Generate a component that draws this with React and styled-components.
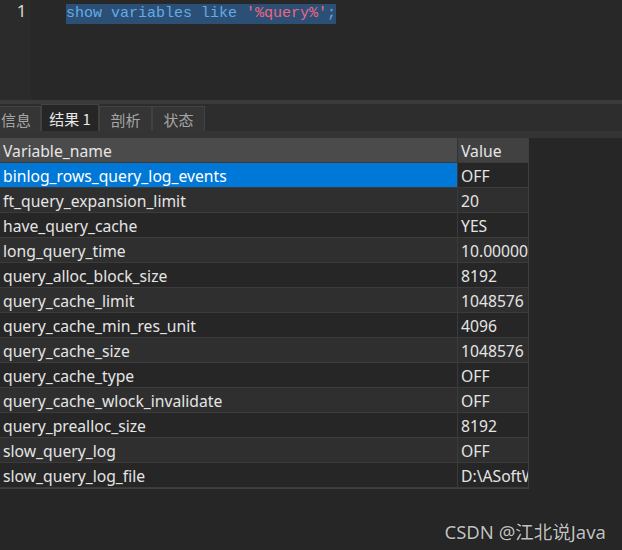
import React from "react";
import styled, { createGlobalStyle } from "styled-components";

const rows = [
  ["binlog_rows_query_log_events", "OFF"],
  ["ft_query_expansion_limit", "20"],
  ["have_query_cache", "YES"],
  ["long_query_time", "10.000000"],
  ["query_alloc_block_size", "8192"],
  ["query_cache_limit", "1048576"],
  ["query_cache_min_res_unit", "4096"],
  ["query_cache_size", "1048576"],
  ["query_cache_type", "OFF"],
  ["query_cache_wlock_invalidate", "OFF"],
  ["query_prealloc_size", "8192"],
  ["slow_query_log", "OFF"],
  ["slow_query_log_file", "D:\\ASoftWare\\mysql\\data\\slow.log"],
];

const tabs = ["信息", "结果 1", "剖析", "状态"];

const App = () => {
  return (
    <Page>
      <GlobalStyle />
      <Editor>
        <Gutter>
          <LineNo>1</LineNo>
        </Gutter>
        <Code>
          <Selected>
            show variables like <Str>'%query%'</Str>;
          </Selected>
        </Code>
      </Editor>
      <Splitter />
      <TabBar>
        {tabs.map((t, i) => (
          <Tab key={t} active={i === 1} first={i === 0}>
            {t}
          </Tab>
        ))}
      </TabBar>
      <Gap />
      <Grid>
        <HeadCell wide>Variable_name</HeadCell>
        <HeadCell>Value</HeadCell>
        {rows.map(([name, value], i) => (
          <React.Fragment key={name}>
            <Cell wide odd={i % 2 === 1} selected={i === 0}>
              {name}
            </Cell>
            <Cell odd={i % 2 === 1}>{value}</Cell>
          </React.Fragment>
        ))}
      </Grid>
      <Watermark>CSDN @江北说Java</Watermark>
    </Page>
  );
};

const GlobalStyle = createGlobalStyle`
  body {
    margin: 0;
    background: #262626;
  }
`;

const Page = styled.div`
  position: relative;
  width: 622px;
  height: 550px;
  background: #262626;
  overflow: hidden;
  font-family: "Noto Sans", "Noto Sans CJK SC", sans-serif;
`;

const Editor = styled.div`
  display: flex;
  height: 100px;
  background: #282828;
`;

const Gutter = styled.div`
  width: 31px;
  background: #2b2b2b;
  display: flex;
  justify-content: center;
`;

const LineNo = styled.div`
  font-family: "Noto Sans", sans-serif;
  font-size: 17px;
  line-height: 22px;
  color: #dcd6cc;
  padding-left: 12px;
`;

const Code = styled.div`
  padding-left: 35px;
`;

const Selected = styled.span`
  display: inline-block;
  background: #2c4f75;
  color: #62abe8;
  font-family: "Liberation Mono", monospace;
  font-size: 15px;
  line-height: 20px;
  white-space: pre;
`;

const Str = styled.span`
  color: #ee6582;
`;

const Splitter = styled.div`
  height: 4px;
  background: #3b3b3b;
`;

const TabBar = styled.div`
  display: flex;
  align-items: flex-end;
  height: 27px;
  background: #2d2d2d;
`;

const Tab = styled.div`
  box-sizing: border-box;
  height: ${(p) => (p.active ? "27px" : "25px")};
  width: ${(p) => (p.first ? "41px" : p.active ? "58px" : "53px")};
  padding-left: ${(p) => (p.first ? "1px" : "0")};
  display: flex;
  align-items: center;
  justify-content: ${(p) => (p.first ? "flex-start" : "center")};
  background: ${(p) => (p.active ? "#262626" : "#353535")};
  border: 1px solid #424242;
  border-left-width: ${(p) => (p.first ? "0" : "1px")};
  border-bottom: none;
  color: ${(p) => (p.active ? "#e8e8e8" : "#a6a6a6")};
  font-family: "Noto Sans CJK SC", sans-serif;
  font-size: 15px;
`;

const Gap = styled.div`
  height: 7px;
  background: #343434;
`;

const Grid = styled.div`
  display: grid;
  grid-template-columns: 457px 71px;
  width: 529px;
  border-right: 1px solid #3e3e3e;
  border-bottom: 1px solid #3e3e3e;
  box-sizing: border-box;
`;

const HeadCell = styled.div`
  box-sizing: border-box;
  height: 25px;
  padding: 1px 0 0 3px;
  display: flex;
  align-items: center;
  background: ${(p) => (p.wide ? "#4b4b4b" : "#414141")};
  border-bottom: 1px solid #3a3a3a;
  border-left: ${(p) => (p.wide ? "none" : "1px solid #333")};
  color: #e6e6e6;
  font-size: 15.7px;
  white-space: nowrap;
  overflow: hidden;
`;

const Cell = styled.div`
  box-sizing: border-box;
  height: 25px;
  padding: 1px 0 0 3px;
  display: flex;
  align-items: center;
  background: ${(p) =>
    p.selected ? "#0078d7" : p.odd ? "#2f2f2f" : "#262626"};
  border-bottom: 1px solid #3b3b3b;
  border-left: ${(p) => (p.wide ? "none" : "1px solid #3b3b3b")};
  color: ${(p) => (p.selected ? "#ffffff" : "#e4e4e4")};
  font-size: 15.7px;
  white-space: nowrap;
  overflow: hidden;
`;

const Watermark = styled.div`
  position: absolute;
  right: 16px;
  bottom: 6px;
  color: #c2c2c2;
  font-family: "Noto Sans", "Noto Sans CJK SC", sans-serif;
  font-size: 18.5px;
  text-shadow: 0 0 1px #000;
`;

export default App;
